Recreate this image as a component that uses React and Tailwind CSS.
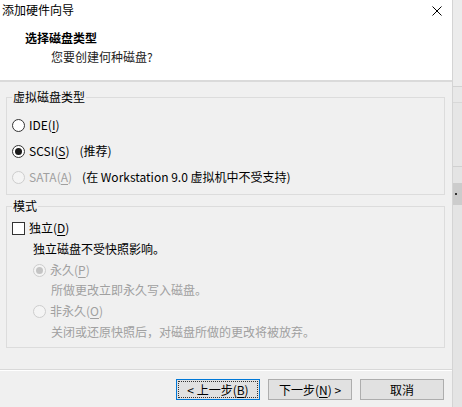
import React from "react";

const font = { fontFamily: '"Noto Sans CJK SC", "Noto Sans", sans-serif' };

function Radio({ checked, disabled }) {
  return (
    <span
      className={`w-[13px] h-[13px] rounded-full border flex items-center justify-center shrink-0 ${
        disabled ? "border-[#cdcdcd] bg-[#f4f4f4]" : "border-[#333333] bg-white"
      }`}
    >
      {checked && (
        <span className={`w-[7px] h-[7px] rounded-full ${disabled ? "bg-[#c4c4c4]" : "bg-[#1a1a1a]"}`} />
      )}
    </span>
  );
}

function Key({ children }) {
  return <span className="underline underline-offset-2">{children}</span>;
}

function Btn({ focus, children }) {
  return (
    <div
      className={`w-[84px] h-[21px] border bg-[#e1e1e1] p-[1px] ${
        focus ? "border-[#0078d7]" : "border-[#adadad]"
      }`}
    >
      <div
        className={`h-full flex items-center justify-center text-[12px] text-black ${
          focus ? "border border-dotted border-[#333]" : ""
        }`}
      >
        {children}
      </div>
    </div>
  );
}

export default function App() {
  return (
    <div className="w-[462px] h-[407px] flex overflow-hidden text-[12px] leading-[16px] text-black" style={font}>
      {/* dialog */}
      <div className="w-[452px] h-full flex flex-col bg-[#f0f0f0]">
        {/* header */}
        <div className="h-[80px] bg-white flex flex-col">
          <div className="h-[20px] flex items-center justify-between pl-[2px] pr-[10px]">
            <span className="text-[12px]">添加硬件向导</span>
            <svg width="10" height="10" viewBox="0 0 10 10" className="mt-[2px]">
              <path d="M0.5 0.5 L9.5 9.5 M9.5 0.5 L0.5 9.5" stroke="#000" strokeWidth="1" />
            </svg>
          </div>
          <div className="mt-[10px] pl-[25px] font-bold">选择磁盘类型</div>
          <div className="mt-[3px] pl-[51px] text-[#222]">您要创建何种磁盘?</div>
        </div>
        <div className="h-[2px] bg-[#dadada]" />

        {/* disk type */}
        <fieldset className="mt-[7px] mx-[6px] w-[439px] border border-[#dcdcdc] pl-[5px] pb-[9px]">
          <legend className="px-[1px]">虚拟磁盘类型</legend>
          <div className="mt-[12px] flex items-center gap-[4px] h-[16px]">
            <Radio />
            <span>
              IDE(<Key>I</Key>)
            </span>
          </div>
          <div className="mt-[10px] flex items-center gap-[4px] h-[16px]">
            <Radio checked />
            <span>
              SCSI(<Key>S</Key>)
            </span>
            <span className="ml-[6px]">(推荐)</span>
          </div>
          <div className="mt-[10px] flex items-center gap-[4px] h-[16px]">
            <Radio disabled />
            <span className="text-[#a0a0a0]">
              SATA(<Key>A</Key>)
            </span>
            <span className="ml-[6px]">(在 Workstation 9.0 虚拟机中不受支持)</span>
          </div>
        </fieldset>

        {/* mode */}
        <fieldset className="mt-[3px] mx-[6px] w-[439px] border border-[#dcdcdc] pl-[5px] pb-[7px]">
          <legend className="px-[1px]">模式</legend>
          <div className="mt-[6px] flex items-center gap-[4px] h-[16px]">
            <span className="w-[13px] h-[13px] border border-[#333333] bg-white shrink-0" />
            <span>
              独立(<Key>D</Key>)
            </span>
          </div>
          <div className="mt-[5px] pl-[21px]">独立磁盘不受快照影响。</div>
          <div className="mt-[5px] pl-[21px] flex items-center gap-[4px] h-[16px] text-[#a0a0a0]">
            <Radio checked disabled />
            <span>
              永久(<Key>P</Key>)
            </span>
          </div>
          <div className="mt-[4px] pl-[39px] text-[#a0a0a0]">所做更改立即永久写入磁盘。</div>
          <div className="mt-[5px] pl-[21px] flex items-center gap-[4px] h-[16px] text-[#a0a0a0]">
            <Radio disabled />
            <span>
              非永久(<Key>O</Key>)
            </span>
          </div>
          <div className="mt-[5px] pl-[39px] text-[#a0a0a0]">关闭或还原快照后，对磁盘所做的更改将被放弃。</div>
        </fieldset>

        {/* footer */}
        <div className="mt-[21px] h-[1px] bg-[#d9d9d9]" />
        <div className="h-[1px] bg-white" />
        <div className="mt-[8px] flex justify-end gap-[8px] pr-[8px]">
          <Btn focus>
            &lt; 上一步(<Key>B</Key>)
          </Btn>
          <Btn>
            下一步(<Key>N</Key>) &gt;
          </Btn>
          <Btn>取消</Btn>
        </div>
      </div>

      {/* background window strip */}
      <div className="flex-1 flex flex-col bg-[#e6e6e6] border-l border-[#d4d4d4]">
        <div className="h-[86px] bg-[#ececec]" />
        <div className="h-[1px] bg-[#d2d2d2]" />
        <div className="h-[15px] bg-[#e8e8e8]" />
        <div className="h-[1px] bg-[#d8d8d8]" />
        <div className="h-[63px] bg-[#e6e6e6]" />
        <div className="h-[1px] bg-[#d0d0d0]" />
        <div className="h-[16px] bg-[#e4e4e4]" />
        <div className="h-[22px] bg-[#cccccc] flex items-center">
          <span className="ml-[2px] w-[2px] h-[2px] bg-[#333]" />
        </div>
        <div className="flex-1 bg-[#e4e4e4]" />
      </div>
    </div>
  );
}
